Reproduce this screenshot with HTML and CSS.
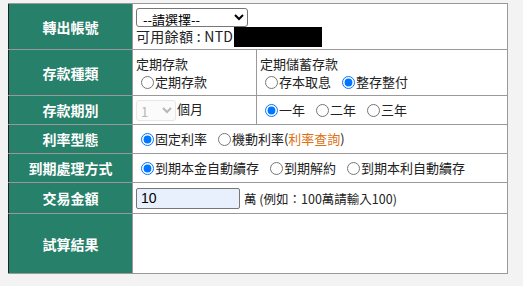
FILE: index.html
```html
<!DOCTYPE html>
<html>
  <head>
    <meta charset="utf-8" />
    <title>定存試算</title>
    <link rel="stylesheet" href="styles.css">
  </head>

  <body>
    <table class="calc">
      <tr class="r-acct">
        <th>轉出帳號</th>
        <td colspan="2">
          <select class="acct">
            <option>--請選擇--</option>
          </select>
          <div class="bal">可用餘額 : NTD<span class="mask"></span></div>
        </td>
      </tr>
      <tr class="r-type">
        <th>存款種類</th>
        <td class="c-left">
          <div>定期存款</div>
          <label><input type="radio" name="kind" />定期存款</label>
        </td>
        <td>
          <div>定期儲蓄存款</div>
          <label><input type="radio" name="kind" />存本取息</label>
          <label><input type="radio" name="kind" checked />整存整付</label>
        </td>
      </tr>
      <tr class="r-line">
        <th>存款期別</th>
        <td class="c-left">
          <select class="month" disabled>
            <option>1</option>
          </select>個月
        </td>
        <td>
          <label><input type="radio" name="year" checked />一年</label>
          <label><input type="radio" name="year" />二年</label>
          <label><input type="radio" name="year" />三年</label>
        </td>
      </tr>
      <tr class="r-line">
        <th>利率型態</th>
        <td colspan="2">
          <label><input type="radio" name="rate" checked />固定利率</label>
          <label><input type="radio" name="rate" />機動利率(<a href="#">利率查詢</a>)</label>
        </td>
      </tr>
      <tr class="r-line">
        <th>到期處理方式</th>
        <td colspan="2">
          <label><input type="radio" name="due" checked />到期本金自動續存</label>
          <label><input type="radio" name="due" />到期解約</label>
          <label><input type="radio" name="due" />到期本利自動續存</label>
        </td>
      </tr>
      <tr class="r-amt">
        <th>交易金額</th>
        <td colspan="2">
          <input type="text" class="amt" value="10" /><span class="hint">萬 (例如：100萬請輸入100)</span>
        </td>
      </tr>
      <tr class="r-res">
        <th>試算結果</th>
        <td colspan="2"></td>
      </tr>
    </table>
  </body>
</html>
```

FILE: styles.css
```css
body {
  margin: 0;
  padding: 3px 8px;
  background: #f3f3f3;
  font: 13px "Noto Sans CJK TC", "Liberation Sans", sans-serif;
  color: #222;
}

.calc {
  width: 500px;
  border-collapse: collapse;
  border-top: 1px solid #222;
  border-left: 1px solid #222;
  border-bottom: 1px solid #222;
  border-right: 1px solid #888;
  background: #fff;
}

.calc th,
.calc td {
  border: 1px solid #999;
  padding: 0 3px;
  line-height: 18px;
  vertical-align: middle;
}

.calc th {
  width: 117px;
  background: #26806a;
  color: #fff;
  font-size: 14px;
  font-weight: bold;
  text-align: center;
  border-left-color: #222;
}

.calc td {
  text-align: left;
}

.calc td.c-left {
  width: 117px;
}

.r-acct th,
.r-acct td {
  height: 45px;
}

.r-type th,
.r-type td {
  height: 45px;
}

.r-line th,
.r-line td {
  height: 28px;
}

.r-amt th,
.r-amt td {
  height: 30px;
}

.r-res th,
.r-res td {
  height: 59px;
}

label {
  margin-right: 3px;
  white-space: nowrap;
}

input[type="radio"] {
  width: 13px;
  height: 13px;
  margin: 0 1px 0 5px;
  vertical-align: -2px;
}

select {
  font: 13px "Noto Sans CJK TC", "Liberation Sans", sans-serif;
  vertical-align: middle;
}

.acct {
  width: 112px;
  height: 19px;
  padding: 0 2px;
  margin-top: 2px;
  border: 1px solid #767676;
  border-radius: 3px;
  background: #fff;
  color: #000;
}

.bal {
  font-size: 14px;
  line-height: 19px;
  letter-spacing: 0.3px;
  color: #222;
}

.mask {
  display: inline-block;
  width: 88px;
  height: 20px;
  margin-left: 1px;
  background: #000;
  vertical-align: -5px;
}

.month {
  width: 40px;
  height: 21px;
  margin-right: 1px;
  border: 1px solid #ddd;
  border-radius: 3px;
  background: #fafafa;
  color: #999;
}

a {
  color: #e07010;
  text-decoration: none;
}

.amt {
  width: 94px;
  height: 17px;
  padding: 1px 4px;
  margin: 0 4px 0 0;
  border: 1px solid #767676;
  border-radius: 2px;
  background: #e8f0fe;
  font: 14px "Liberation Sans", sans-serif;
  color: #000;
  vertical-align: middle;
}

.hint {
  font-size: 12.5px;
  vertical-align: middle;
}
```
